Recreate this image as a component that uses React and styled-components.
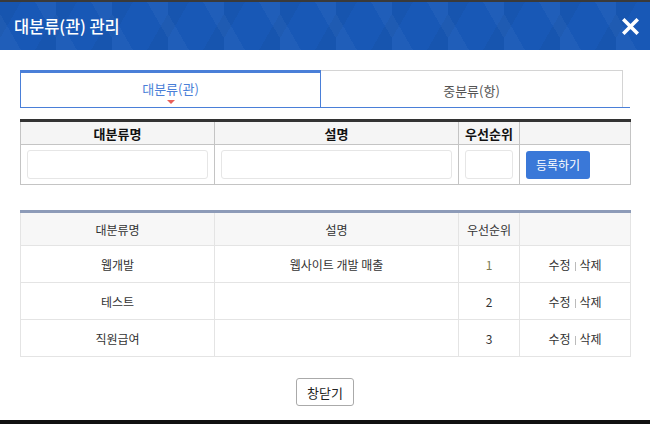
import React from "react";
import styled, { createGlobalStyle } from "styled-components";

const Global = createGlobalStyle`
  html, body { margin: 0; padding: 0; background: #fff; }
  body { font-family: "Noto Sans CJK KR", "Noto Sans", sans-serif; color: #333; }
  * { box-sizing: border-box; }
`;

const Modal = styled.div`
  width: 650px;
  height: 424px;
  display: flex;
  flex-direction: column;
  border-top: 2px solid #3a3a3a;
  border-bottom: 4px solid #111;
  background: #fff;
  overflow: hidden;
`;

const Header = styled.div`
  height: 48px;
  flex: none;
  display: flex;
  align-items: center;
  justify-content: space-between;
  padding: 0 10px 0 14px;
  background-color: #1858b6;
  background-image:
    linear-gradient(60deg, rgba(255,255,255,0.035) 25%, transparent 25%, transparent 75%, rgba(255,255,255,0.035) 75%),
    linear-gradient(120deg, rgba(0,0,0,0.04) 25%, transparent 25%, transparent 75%, rgba(0,0,0,0.04) 75%);
  background-size: 56px 48px;
`;

const Title = styled.h1`
  margin: 0;
  font-size: 16.5px;
  font-weight: 500;
  color: #fff;
  letter-spacing: -0.1px;
`;

const CloseX = styled.button`
  border: 0;
  background: none;
  padding: 0;
  width: 20px;
  height: 20px;
  display: flex;
  align-items: center;
  justify-content: center;
  cursor: pointer;
`;

const Body = styled.div`
  flex: 1;
  display: flex;
  flex-direction: column;
  padding: 20px 20px 0 20px;
`;

const Tabs = styled.div`
  display: flex;
  height: 38px;
  border-bottom: 1px solid #4a7fd8;
`;

const Tab = styled.div`
  position: relative;
  flex: none;
  width: ${(p) => p.$w}px;
  display: flex;
  align-items: center;
  justify-content: center;
  font-size: 13px;
  color: ${(p) => (p.$active ? "#4a7fd8" : "#555")};
  border: 1px solid ${(p) => (p.$active ? "#4a7fd8" : "#d4d4d4")};
  border-top: ${(p) => (p.$active ? "3px solid #4a7fd8" : "1px solid #d4d4d4")};
  border-bottom: 0;
  border-left: ${(p) => (p.$active ? "1px solid #4a7fd8" : "0")};
  padding-top: ${(p) => (p.$active ? "0" : "2px")};
  padding-bottom: ${(p) => (p.$active ? "4px" : "0")};
`;

const Caret = styled.span`
  position: absolute;
  left: 50%;
  bottom: 3px;
  margin-left: -4px;
  width: 0;
  height: 0;
  border-left: 4px solid transparent;
  border-right: 4px solid transparent;
  border-top: 4px solid #e8605a;
`;

const FormTable = styled.table`
  margin-top: 11px;
  width: 610px;
  border-collapse: collapse;
  border-top: 3px solid #333;
  table-layout: fixed;
`;

const FormTh = styled.th`
  height: 24px;
  background: #f5f5f5;
  font-size: 13px;
  font-weight: 700;
  color: #111;
  border: 1px solid #c4c4c4;
  border-top: 0;
  padding: 0;
`;

const FormTd = styled.td`
  height: 40px;
  border: 1px solid #c4c4c4;
  padding: 0 6px;
`;

const Input = styled.input`
  display: block;
  width: 100%;
  height: 29px;
  border: 1px solid #e6e6e6;
  border-radius: 3px;
  outline: none;
`;

const PrimaryBtn = styled.button`
  height: 28px;
  padding: 0 10px;
  background: #3a78d8;
  color: #fff;
  border: 0;
  border-radius: 3px;
  font-family: inherit;
  font-size: 12px;
`;

const ListTable = styled.table`
  margin-top: 25px;
  width: 610px;
  border-collapse: collapse;
  border-top: 3px solid #8d9bb8;
  table-layout: fixed;
`;

const ListTh = styled.th`
  height: 34px;
  background: #f7f7f7;
  font-size: 12px;
  font-weight: 400;
  color: #333;
  border: 1px solid #e4e4e4;
  border-top: 0;
  padding: 0;
`;

const ListTd = styled.td`
  height: 37px;
  font-size: 12px;
  color: ${(p) => p.$color || "#333"};
  text-align: center;
  border: 1px solid #e4e4e4;
  padding: 0;
`;

const Sep = styled.span`
  display: inline-block;
  width: 1px;
  height: 9px;
  background: #bbb;
  margin: 0 4px;
  vertical-align: -1px;
`;

const Footer = styled.div`
  display: flex;
  justify-content: center;
  margin-top: 21px;
`;

const CloseBtn = styled.button`
  height: 28px;
  padding: 0 10px;
  background: #fff;
  border: 1px solid #aaa;
  border-radius: 3px;
  font-family: inherit;
  font-size: 13px;
  color: #222;
`;

const cols = [194, 244, 61, 111];

const rows = [
  { name: "웹개발", desc: "웹사이트 개발 매출", order: "1", color: "#7a7a55" },
  { name: "테스트", desc: "", order: "2" },
  { name: "직원급여", desc: "", order: "3" },
];

export default function App() {
  return (
    <>
      <Global />
      <Modal>
        <Header>
          <Title>대분류(관) 관리</Title>
          <CloseX aria-label="닫기">
            <svg width="17" height="17" viewBox="0 0 17 17">
              <path d="M2.5 2.5 L14.5 14.5 M14.5 2.5 L2.5 14.5" stroke="#fff" strokeWidth="3.6" strokeLinecap="square" />
            </svg>
          </CloseX>
        </Header>
        <Body>
          <Tabs>
            <Tab $active $w={301}>
              대분류(관)
              <Caret />
            </Tab>
            <Tab $w={302}>중분류(항)</Tab>
          </Tabs>

          <FormTable>
            <colgroup>
              {cols.map((w, i) => (
                <col key={i} style={{ width: w }} />
              ))}
            </colgroup>
            <thead>
              <tr>
                <FormTh>대분류명</FormTh>
                <FormTh>설명</FormTh>
                <FormTh>우선순위</FormTh>
                <FormTh />
              </tr>
            </thead>
            <tbody>
              <tr>
                <FormTd>
                  <Input />
                </FormTd>
                <FormTd>
                  <Input />
                </FormTd>
                <FormTd>
                  <Input />
                </FormTd>
                <FormTd>
                  <PrimaryBtn>등록하기</PrimaryBtn>
                </FormTd>
              </tr>
            </tbody>
          </FormTable>

          <ListTable>
            <colgroup>
              {cols.map((w, i) => (
                <col key={i} style={{ width: w }} />
              ))}
            </colgroup>
            <thead>
              <tr>
                <ListTh>대분류명</ListTh>
                <ListTh>설명</ListTh>
                <ListTh>우선순위</ListTh>
                <ListTh />
              </tr>
            </thead>
            <tbody>
              {rows.map((r) => (
                <tr key={r.order}>
                  <ListTd>{r.name}</ListTd>
                  <ListTd>{r.desc}</ListTd>
                  <ListTd $color={r.color}>{r.order}</ListTd>
                  <ListTd>
                    수정
                    <Sep />
                    삭제
                  </ListTd>
                </tr>
              ))}
            </tbody>
          </ListTable>

          <Footer>
            <CloseBtn>창닫기</CloseBtn>
          </Footer>
        </Body>
      </Modal>
    </>
  );
}
